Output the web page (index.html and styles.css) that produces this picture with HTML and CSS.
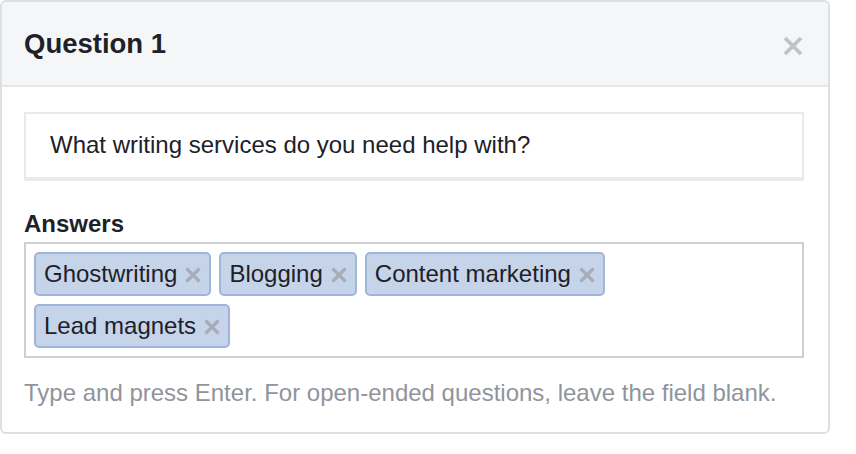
FILE: index.html
```html
<!DOCTYPE html>
<html>
<head>
<meta charset="utf-8">
<link rel="stylesheet" href="styles.css">
</head>
<body>
<div class="card">
  <div class="card-header">
    <div class="title">Question 1</div>
    <svg class="close" width="20" height="20" viewBox="0 0 20 20"><path d="M2 2L18 18M18 2L2 18" stroke="#bec2c9" stroke-width="3.8" stroke-linecap="butt"/></svg>
  </div>
  <div class="card-body">
    <div class="question">What writing services do you need help with?</div>
    <div class="label">Answers</div>
    <div class="answers">
      <span class="tag">Ghostwriting<svg class="x" width="16" height="16" viewBox="0 0 16 16"><path d="M1.5 1.5L14.5 14.5M14.5 1.5L1.5 14.5" stroke="#a6adb9" stroke-width="3.2"/></svg></span>
      <span class="tag">Blogging<svg class="x" width="16" height="16" viewBox="0 0 16 16"><path d="M1.5 1.5L14.5 14.5M14.5 1.5L1.5 14.5" stroke="#a6adb9" stroke-width="3.2"/></svg></span>
      <span class="tag">Content marketing<svg class="x" width="16" height="16" viewBox="0 0 16 16"><path d="M1.5 1.5L14.5 14.5M14.5 1.5L1.5 14.5" stroke="#a6adb9" stroke-width="3.2"/></svg></span>
      <span class="tag">Lead magnets<svg class="x" width="16" height="16" viewBox="0 0 16 16"><path d="M1.5 1.5L14.5 14.5M14.5 1.5L1.5 14.5" stroke="#a6adb9" stroke-width="3.2"/></svg></span>
    </div>
    <div class="help">Type and press Enter. For open-ended questions, leave the field blank.</div>
  </div>
</div>
</body>
</html>
```
FILE: styles.css
```css
html, body {
  margin: 0;
  padding: 0;
  background: #ffffff;
}
body {
  font-family: "Liberation Sans", Arial, Helvetica, sans-serif;
  color: #1d2129;
}
.card {
  box-sizing: border-box;
  width: 830px;
  border: 2px solid #dddfe2;
  border-radius: 6px;
  overflow: hidden;
  background: #ffffff;
}
.card-header {
  box-sizing: border-box;
  height: 85px;
  background: #f5f6f7;
  border-bottom: 2px solid #e5e6e9;
  display: flex;
  align-items: center;
  justify-content: space-between;
  padding: 0 25px 0 22px;
}
.title {
  font-size: 27.5px;
  font-weight: bold;
  line-height: 32px;
  padding-top: 1px;
}
.close {
  display: block;
  margin-top: 4px;
}
.card-body {
  padding: 25px 24px 25px 22px;
}
.question {
  box-sizing: border-box;
  height: 69px;
  border: 2px solid #e9eaed;
  border-bottom-width: 4px;
  padding: 0 24px;
  display: flex;
  align-items: center;
  font-size: 24px;
  line-height: 28px;
  padding-bottom: 2px;
}
.label {
  margin-top: 29px;
  font-size: 24px;
  font-weight: bold;
  line-height: 28px;
}
.answers {
  margin-top: 4px;
  border: 2px solid #ccd0d5;
  padding: 8px;
  display: flex;
  flex-wrap: wrap;
  gap: 8px;
}
.tag {
  box-sizing: border-box;
  height: 44px;
  display: inline-flex;
  align-items: center;
  background: #c6d4ea;
  border: 2px solid #9fb6da;
  border-radius: 5px;
  padding: 0 8px 0 8px;
  font-size: 24px;
  line-height: 28px;
}
.x {
  display: block;
  margin-left: 8px;
  margin-top: 1px;
}
.help {
  margin-top: 21px;
  font-size: 24px;
  line-height: 28px;
  color: #90949c;
}
```
